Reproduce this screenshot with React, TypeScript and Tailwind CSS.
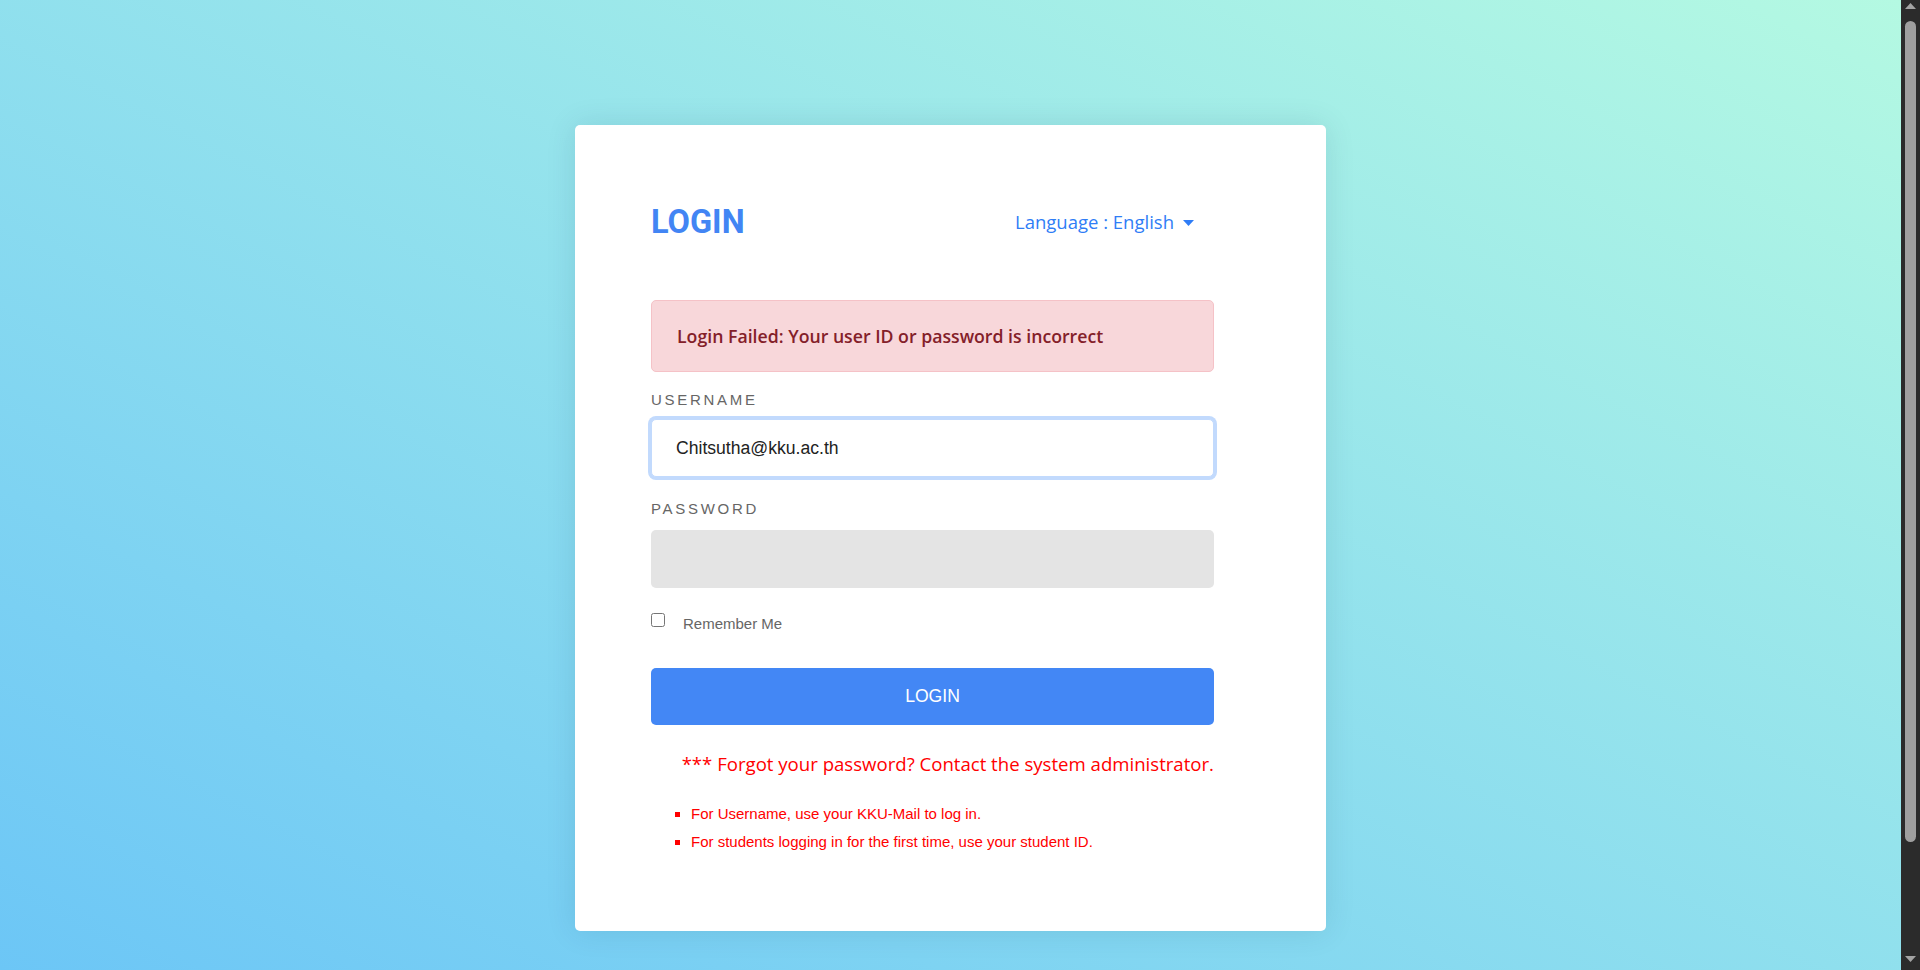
import React from "react";

function Scrollbar() {
  return (
    <div className="flex h-[970px] w-[19px] shrink-0 flex-col items-center bg-[#2b2b2b]">
      <svg className="mt-[3px]" width="11" height="6" viewBox="0 0 11 6">
        <path d="M5.5 0 L11 6 L0 6 Z" fill="#a3a3a3" />
      </svg>
      <div className="mt-[12px] h-[821px] w-[11px] rounded-full bg-[#9f9f9f]" />
      <svg className="mt-[114px]" width="11" height="6" viewBox="0 0 11 6">
        <path d="M0 0 L11 0 L5.5 6 Z" fill="#a3a3a3" />
      </svg>
    </div>
  );
}

export default function App() {
  return (
    <div className="flex h-[970px] overflow-hidden">
      <div className="h-[970px] flex-1 overflow-hidden bg-linear-to-tr from-[#6cc6f6] to-[#b4f9e2]">
        <div className="pt-[125px] pb-[110px]">
          <div className="mx-auto w-[751px] rounded-[5px] bg-white shadow-[0_0_30px_rgba(0,60,90,0.12)] pl-[76px] pr-[112px] pt-[77px] pb-[75px]">
            <div className="flex h-[40px] items-center justify-between">
              <h1 className="font-['Roboto',sans-serif] text-[32.5px] font-bold leading-[40px] text-[#4285f4]">LOGIN</h1>
              <div className="mr-[20px] flex items-center font-['Open_Sans',sans-serif] text-[18.5px] text-[#2f7df6]">
                <span>Language : English</span>
                <svg className="ml-[9px] mt-[2px]" width="11" height="6" viewBox="0 0 11 6">
                  <path d="M0 0 L11 0 L5.5 6 Z" fill="#2f7df6" />
                </svg>
              </div>
            </div>

            <div className="mt-[58px] flex h-[72px] items-center rounded-[5px] border border-[#f5c2c7] bg-[#f8d7da] px-[25px] font-['Open_Sans',sans-serif] text-[17.7px] font-semibold text-[#842029]">
              Login Failed: Your user ID or password is incorrect
            </div>

            <label className="mt-[18px] block h-[20px] font-['Liberation_Sans',Arial,sans-serif] text-[15px] leading-[20px] tracking-[2.7px] text-[#666666]">
              USERNAME
            </label>
            <input
              type="text"
              defaultValue="Chitsutha@kku.ac.th"
              className="mt-[9px] block h-[58px] w-full rounded-[5px] border border-[#c2dafd] bg-white px-[24px] font-['Liberation_Sans',Arial,sans-serif] text-[17.6px] text-[#222222] shadow-[0_0_0_3px_#c2dafd] outline-none"
            />

            <label className="mt-[22px] block h-[20px] font-['Liberation_Sans',Arial,sans-serif] text-[15px] leading-[20px] tracking-[2.7px] text-[#666666]">
              PASSWORD
            </label>
            <input
              type="password"
              className="mt-[11px] block h-[58px] w-full rounded-[5px] border-0 bg-[#e4e4e4] px-[24px] outline-none"
            />

            <div className="mt-[25px] flex items-start">
              <input type="checkbox" className="m-0 h-[14px] w-[14px]" />
              <span className="ml-[18px] font-['Liberation_Sans',Arial,sans-serif] text-[15px] leading-[22px] text-[#666666]">
                Remember Me
              </span>
            </div>

            <button className="mt-[33px] flex h-[57px] w-full items-center justify-center rounded-[5px] bg-[#4387f5] font-['Liberation_Sans',Arial,sans-serif] text-[17.6px] text-white">
              LOGIN
            </button>

            <p className="mt-[25px] text-right font-['Open_Sans',sans-serif] text-[18.6px] leading-[28px] text-[#ff0000]">
              *** Forgot your password? Contact the system administrator.
            </p>

            <ul className="mt-[22px] list-[square] pl-[40px] font-['Liberation_Sans',Arial,sans-serif] text-[15px] leading-[28px] text-[#ff0000]">
              <li>For Username, use your KKU-Mail to log in.</li>
              <li>For students logging in for the first time, use your student ID.</li>
            </ul>
          </div>
        </div>
      </div>
      <Scrollbar />
    </div>
  );
}
